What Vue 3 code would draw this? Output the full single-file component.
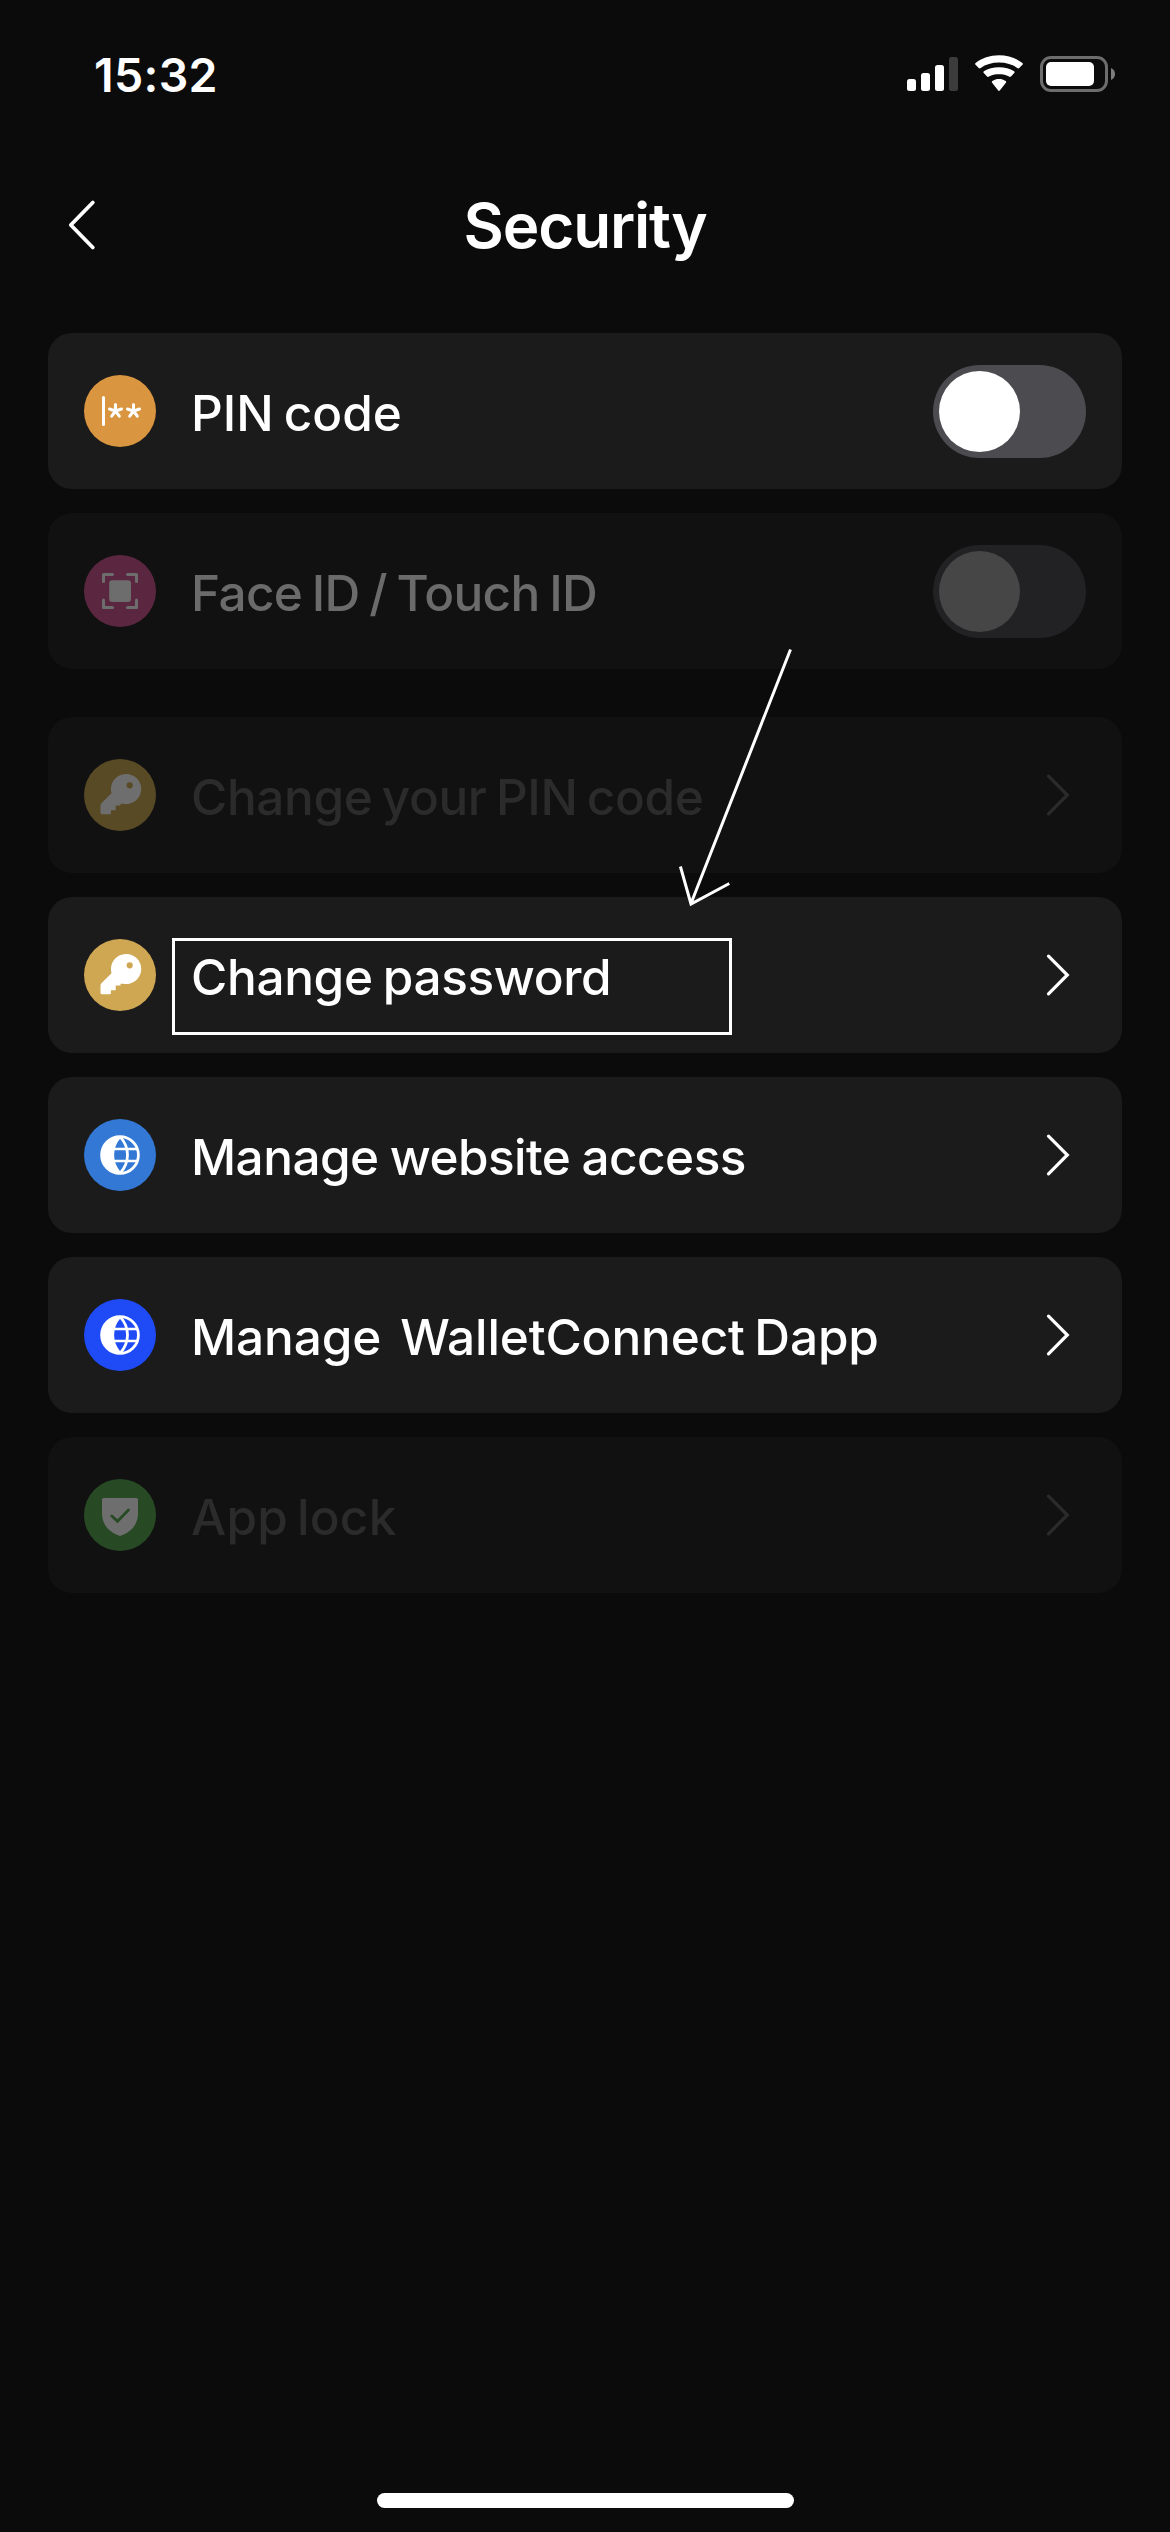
<script setup>
const groups = [
  [
    { label: 'PIN code', icon: 'pin', control: 'toggle', ls: 0, ws: -3.2 },
    { label: 'Face ID / Touch ID', icon: 'face', control: 'toggle', off: true, ls: -0.65, ws: -3 },
  ],
  [
    { label: 'Change your PIN code', icon: 'key', off: true, ls: -0.38, ws: -3.5 },
    { label: 'Change password', icon: 'key', marked: true, ls: -0.35, ws: -2.8 },
    { label: 'Manage website access', icon: 'globe', ls: -0.55, ws: -1.5 },
    { label: 'Manage  WalletConnect Dapp', icon: 'globe', tone: 'wallet', ls: -0.12, ws: -3.6 },
    { label: 'App lock', icon: 'shield', off: true, ls: 0.3, ws: -4.8 },
  ],
]
</script>

<template>
  <div class="screen">
    <div class="status">
      <span class="time">15:32</span>
      <svg class="status-icons" width="212" height="40" viewBox="0 0 212 40">
        <g fill="#fff">
          <rect x="0" y="26" width="9" height="12" rx="2.5" />
          <rect x="14" y="20" width="9" height="18" rx="2.5" />
          <rect x="28" y="12" width="9" height="26" rx="2.5" />
          <rect x="42" y="4" width="9" height="34" rx="2.5" fill="#3c3c3c" />
          <path d="M68.600 11.800a1.200 1.200 0 0 1 0-1.800C74.500 5 83 2.200 92 2.200S109.500 5 115.400 10a1.200 1.200 0 0 1 0 1.800L112.300 15a1.500 1.500 0 0 1-2 .1C105.500 11.500 99 9.600 92 9.600S78.500 11.500 73.700 15.100a1.500 1.500 0 0 1-2-.1z" />
          <path d="M76.800 20.100a1.200 1.200 0 0 1 0-1.800C81 15.700 86.200 14.200 92 14.200s11 1.500 15.200 4.100a1.200 1.200 0 0 1 0 1.800L104 23.500a1.500 1.500 0 0 1-2 .1C99.200 21.800 96 21.300 92 21.300s-7.200.5-10 2.300a1.500 1.500 0 0 1-2-.1z" />
          <path d="M85.300 30a1.200 1.200 0 0 1 0-1.900C87.300 26.600 89.500 26 92 26s4.700.6 6.700 2.100a1.200 1.200 0 0 1 0 1.900L92.800 37.500a1.100 1.100 0 0 1-1.600 0z" />
          <rect x="139" y="9" width="48" height="24" rx="5" />
        </g>
        <rect x="134.500" y="4.500" width="65" height="33" rx="9.500" fill="none" stroke="#6d6d6d" stroke-width="3" />
        <path d="M204 15c2.500 1 4 3.300 4 6s-1.500 5-4 6z" fill="#7d7d7d" />
      </svg>
    </div>

    <header class="header">
      <svg class="back" width="32" height="60" viewBox="0 0 32 60">
        <path d="M26.800 7.500 4.800 30 26.800 52.500" fill="none" stroke="#fff" stroke-width="3.800" stroke-linecap="round" stroke-linejoin="round" />
      </svg>
      <h1 class="title">Security</h1>
    </header>

    <main class="groups">
      <section v-for="(rows, g) in groups" :key="g" class="group">
        <div v-for="row in rows" :key="row.label" class="row" :class="{ off: row.off }">
          <span class="badge" :class="[row.icon, row.tone]">
            <svg v-if="row.icon === 'pin'" width="72" height="72" viewBox="0 0 72 72" fill="none" stroke="#fff" stroke-width="3" stroke-linecap="round">
              <path d="M19.500 22.500v27" />
              <path d="M31.500 36V29.500M31.500 36l-6-2M31.500 36l6-2M31.500 36l-3.800 5.200M31.500 36l3.800 5.200" />
              <path d="M49.500 36V29.500M49.500 36l-6-2M49.500 36l6-2M49.500 36l-3.800 5.200M49.500 36l3.800 5.200" />
            </svg>
            <svg v-else-if="row.icon === 'face'" width="72" height="72" viewBox="0 0 72 72">
              <path d="M19.500 26.500v-7h9M43.500 19.500h9v7M52.500 45v7.500h-9M28.500 52.500h-9V45" fill="none" stroke="#6d6d6d" stroke-width="3" stroke-linecap="round" stroke-linejoin="round" />
              <rect x="25.200" y="25.200" width="21.800" height="21.800" rx="3" fill="#6d6d6d" />
            </svg>
            <svg v-else-if="row.icon === 'key'" width="72" height="72" viewBox="0 0 72 72">
              <path fill="currentColor" fill-rule="evenodd" d="M42 15a15 15 0 1 1-2.700 29.700L36.500 44.800V46.500H31.700V51.300H26.900V54a1.300 1.300 0 0 1-1.300 1.300H18a1.500 1.500 0 0 1-1.500-1.500V46.500a3 3 0 0 1 .9-2.200L27.500 34.200A15 15 0 0 1 42 15zM45.700 23.200a3.100 3.100 0 1 0 0 6.200a3.100 3.100 0 0 0 0-6.200z" />
            </svg>
            <svg v-else-if="row.icon === 'globe'" width="72" height="72" viewBox="0 0 72 72" fill="none" stroke="#fff" stroke-width="2.800">
              <path d="M36 17C26.500 28.500 26.500 43.500 36 55A19 19 0 0 1 36 17z" fill="#fff" stroke="none" />
              <circle cx="36" cy="36" r="18.400" />
              <path d="M36 17.600C26.300 28.500 26.300 43.500 36 54.400M36 17.600C46 28.500 46 43.500 36 54.400" />
              <path d="M29 30H53.400M29 42H53.400" stroke-width="2.600" />
            </svg>
            <svg v-else width="72" height="72" viewBox="0 0 72 72">
              <path d="M20 19H52a2 2 0 0 1 2 2V34.500C54 46 46.500 53.500 36 57 25.500 53.500 18 46 18 34.500V21a2 2 0 0 1 2-2z" fill="#6e6e6e" />
              <path d="M27.800 37 33.500 42.300 44.500 31" fill="none" stroke="#274a25" stroke-width="2.800" stroke-linecap="round" />
            </svg>
          </span>
          <span class="label" :class="row.icon" :style="{ letterSpacing: row.ls + 'px', wordSpacing: row.ws + 'px' }">{{ row.label }}</span>
          <span v-if="row.control === 'toggle'" class="toggle"><i class="knob"></i></span>
          <svg v-else class="chevron" width="28" height="48" viewBox="0 0 28 48">
            <path d="M4.500 5.200 23.300 24 4.500 42.800" fill="none" stroke="currentColor" stroke-width="3.200" stroke-linecap="round" stroke-linejoin="miter" />
          </svg>
          <template v-if="row.marked">
            <i class="frame"></i>
            <svg class="arrow" width="120" height="270" viewBox="0 0 120 270">
              <path d="M113.500 4.500 14 258.500M3.400 221.500 14 259 52.300 238.500" fill="none" stroke="#fff" stroke-width="3" />
            </svg>
          </template>
        </div>
      </section>
    </main>
    <div class="home"></div>
  </div>
</template>

<style>
body {
  background: #0b0b0b;
}
</style>

<style scoped>
.screen {
  box-sizing: border-box;
  width: 1170px;
  height: 2532px;
  display: flex;
  flex-direction: column;
  background: #0b0b0b;
  color: #fff;
  font-family: Inter, "Liberation Sans", sans-serif;
  overflow: hidden;
}
.status {
  box-sizing: border-box;
  height: 150px;
  padding: 44px 51px 0 94px;
  display: flex;
  justify-content: space-between;
  align-items: flex-start;
}
.time {
  font-size: 46.500px;
  line-height: 62px;
  font-weight: 600;
  letter-spacing: 0.3px;
}
.status-icons {
  display: block;
  margin-top: 9px;
}
.header {
  height: 183px;
  display: grid;
  grid-template-columns: 32px 1fr 32px;
  padding: 0 66px;
  align-items: start;
}
.back {
  display: block;
  margin-top: 45px;
}
.title {
  margin: 38px 0 0;
  font-size: 62px;
  line-height: 76px;
  font-weight: 600;
  text-align: center;
  letter-spacing: -1.15px;
}
.groups {
  display: flex;
  flex-direction: column;
  gap: 48px;
  padding: 0 48px;
}
.group {
  display: flex;
  flex-direction: column;
  gap: 24px;
}
.row {
  position: relative;
  box-sizing: border-box;
  height: 156px;
  padding: 0 36px;
  display: flex;
  align-items: center;
  border-radius: 24px;
  background: #1b1b1b;
}
.row.off {
  background: #111;
}
.badge {
  flex: none;
  width: 72px;
  height: 72px;
  border-radius: 50%;
  overflow: hidden;
}
.badge svg {
  display: block;
}
.badge.pin { background: #d9953f; }
.badge.face { background: #5b2740; }
.badge.key { background: #cfa753; color: #fff; }
.off .badge.key { background: #594a26; color: #6e6e6e; }
.badge.globe { background: #3278d4; }
.badge.wallet { background: #1f4bf6; }
.badge.shield { background: #274a25; }
.label {
  flex: 1;
  margin-left: 35px;
  padding-top: 4px;
  font-size: 49.5px;
  line-height: 60px;
  font-weight: 500;
  white-space: pre;
}
.off .label { color: #2b2b2b; }
.off .label.face { color: #6b6b6b; }
.toggle {
  box-sizing: border-box;
  flex: none;
  width: 153px;
  height: 93px;
  margin-top: 1px;
  padding: 6px;
  border-radius: 47px;
  background: #4c4b50;
}
.knob {
  display: block;
  width: 81px;
  height: 81px;
  border-radius: 50%;
  background: #fff;
}
.off .toggle { background: #222224; }
.off .knob { background: #464647; }
.chevron {
  flex: none;
  margin-right: 14px;
  color: #fff;
}
.off .chevron { color: #2b2b2b; }
.frame {
  position: absolute;
  left: 124px;
  top: 41px;
  box-sizing: border-box;
  width: 560px;
  height: 97px;
  border: 3px solid #fff;
}
.arrow {
  position: absolute;
  left: 629px;
  top: -252px;
}
.home {
  width: 417px;
  height: 15px;
  margin: auto auto 24px 377px;
  border-radius: 8px;
  background: #fff;
}
</style>
